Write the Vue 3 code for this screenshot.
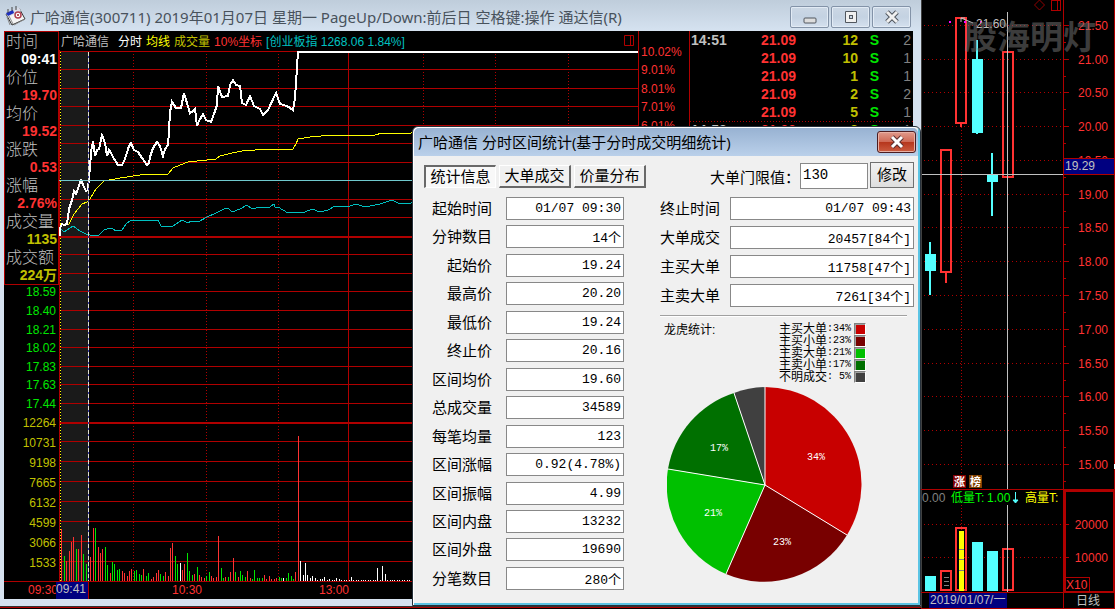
<script setup>
import { ref } from 'vue'

const info = [
  { label: '时间', value: '09:41', tone: 'white' },
  { label: '价位', value: '19.70', tone: 'red' },
  { label: '均价', value: '19.52', tone: 'red' },
  { label: '涨跌', value: '0.53', tone: 'red' },
  { label: '涨幅', value: '2.76%', tone: 'red' },
  { label: '成交量', value: '1135', tone: 'gold' },
  { label: '成交额', value: '224万', tone: 'gold' },
]

const leftAxis = [
  ['18.59', 291], ['18.40', 310], ['18.21', 329], ['18.02', 347], ['17.83', 366], ['17.63', 384], ['17.44', 403],
  ['12264', 422], ['10731', 442], ['9198', 462], ['7665', 482], ['6132', 502], ['4599', 522], ['3066', 542], ['1533', 562],
].map(([text, y]) => ({ text, y }))

const rightAxis = [
  ['10.02%', 51], ['9.01%', 69], ['8.01%', 88], ['7.01%', 106], ['6.01%', 125],
].map(([text, y]) => ({ text, y }))

const gridRows = [51, 69, 88, 106, 125, 143, 162, 199, 217, 254, 273, 291, 310, 329, 347, 366, 384, 403, 441, 461, 481, 501, 521, 541, 561, 581]
const gridDots = [133, 206, 278, 423, 495, 568]

const priceLine = '60,236 60,228 62,224 64,225 67,224 69,209 72,200 74,191 76,194 78,189 80,182 81,180 84,187 86,191 88,190 89,176 90,168 91,152 93,141 95,156 97,150 99,149 102,135 105,143 107,156 109,150 111,153 113,157 118,165 122,165 125,159 129,146 131,143 134,150 138,152 142,158 147,165 149,163 150,157 153,148 157,142 160,146 163,156 165,149 168,145 169,131 170,112 172,102 176,108 181,108 184,93 187,103 190,113 193,111 195,109 197,126 199,121 203,114 206,120 211,122 214,114 217,105 218,86 222,97 228,96 230,85 233,80 236,85 240,86 242,103 246,105 250,96 254,106 260,109 263,115 268,110 276,93 280,104 287,106 293,110 295,98 298,52 638,52'
const averageLine = '60,225 69,224 74,214 82,204 87,202 90,199 96,189 104,181 120,178 140,175 168,174 173,168 180,165 188,162 216,159 220,156 232,153 242,151 255,150 293,149 296,144 298,139 310,137 333,135 375,135 382,133 411,133 638,132'
const indexLine = '60,228 64,232 73,226 80,231 86,234 94,236 99,235 104,230 110,228 112,228 116,231 122,230 126,224 131,220 134,221 158,220 161,226 173,226 182,220 188,223 191,221 198,222 207,217 216,213 224,209 226,208 229,209 232,212 240,209 247,205 252,209 256,208 270,207 274,204 275,207 278,207 288,213 305,212 312,209 320,212 328,210 335,206 350,206 356,204 365,207 380,204 392,200 400,204 411,203 638,206'

const volumeText = '61r52 64g25 66r20 69r30 71r39 73r44 76g32 78r32 81r46 83g27 86g17 90r24 93r53 95g53 98r34 100r28 102r32 105g34 107g16 110r8 112g19 114g17 117g11 119g12 122r10 124r8 127r5 129r10 131r12 134g10 136g11 139g7 141g6 143r12 146g5 148g8 151r2 153r4 156r8 158r11 160g7 163g5 165r9 168r5 170r33 172r38 175g25 177g17 180w18 182r11 184r17 187g28 189g10 192g6 194r7 197g14 199r6 201r4 204r3 206g5 209g9 211r5 213r3 216r4 218r45 221g13 223g3 225r4 228g4 230r9 233r23 235g9 238r4 240g10 242g6 245g4 247r10 250r3 252g2 254g11 257g3 259g3 262g3 264r6 266r2 269r5 271r2 274r2 276r3 279g4 281g3 283w3 286g3 288g8 291g5 293g2 295r9 298r145 300w20 303w6 305w18 307w6 310w3 312w5 315w3 317w1 320w2 322w2 324w4 327w1 329w2 332w1 334w1 336w3 339w2 341w1 344w1 346w1 349w1 351w4 353w1 356w1 358w1 361w1 363w1 365w1 368w1 370w1 373w1 375w1 377w13 380w1 382w15 385w7 387w1 390w1 392w1 394w1 397w1 399w1 402w1 404w1 407w1 409w1'
const barColors = { r: '#ff3232', g: '#00e600', w: '#ffffff' }
const volumes = volumeText.split(' ').map((item) => {
  const [, x, key, h] = item.match(/(\d+)([rgw])(\d+)/)
  return { x: Number(x), h: Number(h), fill: barColors[key] }
})

const trades = [
  ['14:51', '21.09', '12', 'S', '2'],
  ['', '21.09', '10', 'S', '1'],
  ['', '21.09', '1', 'S', '1'],
  ['', '21.09', '2', 'S', '2'],
  ['', '21.09', '5', 'S', '1'],
  ['14:52', '21.09', '8', 'S', '1'],
]

const dayAxis = [
  ['21.50', 25], ['21.00', 59], ['20.50', 92], ['20.00', 126], ['19.50', 160], ['19.00', 194], ['18.50', 227],
  ['18.00', 261], ['17.50', 295], ['17.00', 329], ['16.50', 363], ['16.00', 396], ['15.50', 430], ['15.00', 464],
].map(([text, y]) => ({ text, y }))

const tabs = ['统计信息', '大单成交', '价量分布']
const activeTab = ref('统计信息')
const threshold = ref('130')

const leftFields = [
  ['起始时间', '01/07 09:30'], ['分钟数目', '14个'], ['起始价', '19.24'], ['最高价', '20.20'], ['最低价', '19.24'],
  ['终止价', '20.16'], ['区间均价', '19.60'], ['总成交量', '34589'], ['每笔均量', '123'], ['区间涨幅', '0.92(4.78%)'],
  ['区间振幅', '4.99'], ['区间内盘', '13232'], ['区间外盘', '19690'], ['分笔数目', '280个'],
]
const rightFields = [
  ['终止时间', '01/07 09:43'], ['大单成交', '20457[84个]'], ['主买大单', '11758[47个]'], ['主卖大单', '7261[34个]'],
]

const legend = [
  { name: '主买大单', share: '34%', color: '#c80000' },
  { name: '主买小单', share: '23%', color: '#780000' },
  { name: '主卖大单', share: '21%', color: '#00c000' },
  { name: '主卖小单', share: '17%', color: '#007000' },
  { name: '不明成交', share: '5%', color: '#404040' },
]
const slices = [
  { from: [98, 0], to: [180, 148], label: [149, 73] },
  { from: [180, 148], to: [59, 187], label: [115, 158] },
  { from: [59, 187], to: [1, 82], label: [46, 129] },
  { from: [1, 82], to: [67, 6], label: [52, 64] },
  { from: [67, 6], to: [98, 0], label: null },
].map((s, i) => ({ ...s, ...legend[i], d: `M98 98L${s.from}A97 97 0 0 1 ${s.to}Z` }))
</script>

<template>
  <div class="desktop">
    <section class="window">
      <header class="titlebar">
        <svg class="app-icon" width="22" height="21" viewBox="0 0 22 21">
          <path d="M1 8L14 2L20 13L7 19Z" fill="#f4f4f4" stroke="#333" />
          <path d="M1 7L14 1L16 5L3 11Z" fill="#d8dce8" />
          <path d="M1 7L8 4L9 7L3 10Z" fill="#1c2fc0" />
          <path d="M2 11L5 19M4 10L8 18M9 19L20 13" stroke="#8a8a8a" fill="none" />
          <circle cx="13" cy="9" r="3" fill="#fff" stroke="#b04050" stroke-width="1.500" />
          <circle cx="13" cy="9" r="1" fill="#a02030" />
          <path d="M3 3V7M7 1V5M11 0V4" stroke="#444" />
        </svg>
        <h1>广哈通信(300711) 2019年01月07日 星期一 PageUp/Down:前后日 空格键:操作 通达信(R)</h1>
        <div class="controls">
          <button type="button" aria-label="最小化">
            <svg width="16" height="16" viewBox="0 0 16 16"><rect x="2" y="9" width="12" height="5" rx="1" fill="#ddd" stroke="#50565e" /></svg>
          </button>
          <button type="button" aria-label="最大化">
            <svg width="16" height="16" viewBox="0 0 16 16"><path d="M2.500 2.500H13.500V13.500H2.500Z" fill="#f0f0f0" stroke="#50565e" /><rect x="6.500" y="6.500" width="3" height="3" fill="#c9d6e4" stroke="#50565e" /></svg>
          </button>
          <button type="button" aria-label="关闭">
            <svg width="16" height="16" viewBox="0 0 16 16"><path d="M3 3L13 13M13 3L3 13" stroke="#50565e" stroke-width="5" /><path d="M3 3L13 13M13 3L3 13" stroke="#f0f0f0" stroke-width="3" /></svg>
          </button>
        </div>
      </header>

      <div class="workspace">
        <aside class="side">
          <dl class="info">
            <template v-for="row in info" :key="row.label">
              <dt>{{ row.label }}</dt>
              <dd :class="row.tone">{{ row.value }}</dd>
            </template>
          </dl>
          <svg class="axis" viewBox="4 285 55 314">
            <text v-for="tick in leftAxis" :key="tick.text" x="56" :y="tick.y + 5" text-anchor="end" :fill="tick.y < 410 ? '#00e600' : '#c0c000'">{{ tick.text }}</text>
            <rect x="4" y="581" width="55" height="1" fill="#b00000" />
            <text x="28" y="594" fill="#ff3232">09:30</text>
          </svg>
        </aside>

        <div class="plot">
          <div class="plot-head">
            <span class="silver">广哈通信</span>
            <span class="head-group">
              <span class="white">分时</span><span class="yellow">均线</span><span class="gold">成交量</span>
              <span class="red">10%坐标</span><span class="teal">[创业板指 1268.06 1.84%]</span>
            </span>
            <svg class="pane-icon" width="12" height="12" viewBox="0 0 12 12"><path d="M0.500 0.500H9.500V10.500H0.500ZM6.500 0.500V10.500" fill="none" stroke="#b00000" /></svg>
          </div>
          <svg class="chart" viewBox="59 50 580 549">
            <g shape-rendering="crispEdges">
              <rect x="61" y="52" width="27" height="529" fill="#1a1a1a" />
              <rect v-for="y in gridRows" :key="y" x="60" :y="y" width="578" height="1" fill="#b00000" />
              <rect x="60" y="236" width="578" height="2" fill="#b00000" />
              <rect x="60" y="422" width="578" height="2" fill="#b00000" />
              <line v-for="x in gridDots" :key="x" :x1="x + 0.5" :x2="x + 0.5" y1="54" y2="581" stroke="#b00000" stroke-dasharray="1 2" />
              <rect x="59" y="50" width="1" height="549" fill="#b00000" />
              <rect x="348" y="51" width="1" height="531" fill="#b00000" />
              <rect x="638" y="50" width="1" height="549" fill="#b00000" />
              <line x1="60.5" x2="60.5" y1="52" y2="581" stroke="#ffff00" stroke-dasharray="1 2" />
              <rect v-for="bar in volumes" :key="bar.x" :x="bar.x" :y="581 - bar.h" width="1" :height="bar.h" :fill="bar.fill" />
            </g>
            <g fill="none" shape-rendering="crispEdges">
              <polyline :points="indexLine" stroke="#00c0c0" />
              <polyline :points="averageLine" stroke="#ffff00" />
            </g>
            <polyline :points="priceLine" fill="none" stroke="#fff" stroke-width="2" shape-rendering="crispEdges" />
            <g shape-rendering="crispEdges">
              <rect x="59" y="180" width="579" height="1" fill="#6fc8cc" />
              <line x1="88.5" x2="88.5" y1="52" y2="581" stroke="#3838a8" />
              <line x1="88.5" x2="88.5" y1="52" y2="581" stroke="#e0e0d0" stroke-dasharray="4 2" />
              <rect x="56" y="582" width="32" height="17" fill="#000080" />
              <rect x="88" y="582" width="1" height="17" fill="#b00000" />
            </g>
            <text x="56" y="593" fill="#c0c0c0">09:41</text>
            <text x="187" y="594" text-anchor="middle" fill="#ff3232">10:30</text>
            <text x="334" y="594" text-anchor="middle" fill="#ff3232">13:00</text>
          </svg>
        </div>

        <svg class="axis percent" viewBox="639 31 50 568">
          <text v-for="tick in rightAxis" :key="tick.text" x="641" :y="tick.y + 5" fill="#ff3232">{{ tick.text }}</text>
        </svg>

        <table class="trades">
          <tbody>
            <tr v-for="(row, i) in trades" :key="i">
              <td class="silver time">{{ row[0] }}</td>
              <td class="red">{{ row[1] }}</td>
              <td class="gold">{{ row[2] }}</td>
              <td class="green">{{ row[3] }}</td>
              <td class="gray">{{ row[4] }}</td>
            </tr>
          </tbody>
        </table>
      </div>
    </section>

    <section class="daily">
      <svg viewBox="921 0 194 609">
        <g shape-rendering="crispEdges">
          <rect x="921" y="0" width="1" height="609" fill="#404040" />
          <line v-for="tick in dayAxis" :key="tick.y" x1="924" x2="1063" :y1="tick.y + 0.5" :y2="tick.y + 0.5" stroke="#b00000" stroke-dasharray="1 3" />
          <line x1="924" x2="1063" y1="524.5" y2="524.5" stroke="#b00000" stroke-dasharray="1 3" />
          <line x1="924" x2="1063" y1="557.5" y2="557.5" stroke="#b00000" stroke-dasharray="1 3" />
          <line x1="961.5" x2="961.5" y1="127" y2="489" stroke="#b00000" stroke-dasharray="1 2" />
          <line x1="961.5" x2="961.5" y1="505" y2="592" stroke="#b00000" stroke-dasharray="1 2" />
          <g fill="#b00000">
            <rect x="1063" y="0" width="1" height="609" />
            <rect x="1114" y="0" width="1" height="609" />
            <rect v-for="tick in dayAxis" :key="tick.y" x="1064" :y="tick.y" width="5" height="1" />
            <rect v-for="tick in dayAxis" :key="tick.text" x="1064" :y="tick.y + 17" width="2" height="1" />
            <rect x="1064" y="524" width="5" height="1" />
            <rect x="1064" y="541" width="2" height="1" />
            <rect x="1064" y="557" width="5" height="1" />
            <rect x="921" y="489" width="194" height="1" />
            <rect x="921" y="592" width="194" height="1" />
            <rect x="921" y="608" width="194" height="1" />
          </g>
          <g fill="none" stroke="#b00000">
            <path d="M1051.500 0.500H1060.500V10.500H1051.500ZM1057.500 0.500V10.500" />
            <rect x="1065" y="491" width="49" height="101" stroke-width="2" />
            <rect x="1064.500" y="577.500" width="25" height="15" />
          </g>
          <g fill="#54ffff">
            <rect x="929" y="242" width="2" height="53" /><rect x="925" y="254" width="11" height="17" />
            <rect x="976" y="40" width="2" height="94" /><rect x="972" y="59" width="11" height="74" />
            <rect x="991" y="153" width="2" height="63" /><rect x="987" y="174" width="11" height="8" />
            <rect x="925" y="576" width="11" height="15" />
            <rect x="972" y="542" width="11" height="49" />
            <rect x="987" y="551" width="11" height="40" />
          </g>
          <g fill="none" stroke="#ff3232" stroke-width="2">
            <path d="M941 150H951V272H941ZM946 273V283" />
            <path d="M956 18H966V123H956ZM961 124V127" />
            <path d="M1003 52H1013V177H1003Z" />
            <path d="M941 571H951V590H941ZM956 528H966V590H956ZM1003 549H1013V590H1003Z" />
          </g>
          <rect x="959" y="531" width="5" height="60" fill="#ffff00" />
          <path d="M959 549.500H964M959 559.500H964M959 570.500H964M944 577.500H949M944 581.500H949M944 585.500H949" stroke="#808080" />
          <g fill="#ff00ff"><rect x="949" y="21" width="2" height="2" /><rect x="964" y="21" width="2" height="2" /><rect x="980" y="21" width="2" height="2" /></g>
          <rect x="922" y="174" width="142" height="1" fill="#c0c0c0" />
          <rect x="1007" y="12" width="1" height="477" fill="#c0c0c0" />
          <rect x="1007" y="505" width="1" height="87" fill="#c0c0c0" />
        </g>
        <path d="M1039.500 0L1044.500 5L1039.500 10L1034.500 5Z" fill="none" stroke="#900000" />
        <path d="M961 18L973 23M961 18V22M961 18H965" stroke="#c0c0c0" fill="none" />
        <text x="976" y="28" fill="#c0c0c0">21.60</text>
        <g fill="#ff3232" text-anchor="end">
          <text v-for="tick in dayAxis" :key="tick.text" x="1108" :y="tick.y + 5">{{ tick.text }}</text>
          <text x="1108" y="529">20000</text>
          <text x="1108" y="562">10000</text>
        </g>
        <text x="1066" y="589" fill="#ff3232">X10</text>
        <text class="watermark" x="964" y="49">股海明灯</text>
        <rect x="1063.500" y="158.500" width="51" height="16" fill="#000080" stroke="#b00000" />
        <text x="1065" y="170" fill="#c0c0c0">19.29</text>
        <rect x="953" y="475" width="13" height="13" fill="#800000" />
        <rect x="969" y="475" width="13" height="13" fill="#804000" />
        <g fill="#fff" class="badge"><text x="954" y="486">涨</text><text x="970" y="486">榜</text></g>
        <text x="922" y="502" fill="#808080">0.00</text>
        <text x="951" y="502" fill="#00ff00">低量T:</text>
        <text x="987" y="502" fill="#00ff00">1.00</text>
        <path d="M1015.500 492V502M1013 500H1018L1015.500 503Z" stroke="#54ffff" fill="#54ffff" />
        <text x="1025" y="502" fill="#ffff00">高量T:</text>
        <rect x="929" y="593" width="78" height="15" fill="#000080" />
        <text x="930" y="604" fill="#c0c0c0">2019/01/07/一</text>
        <text x="1076" y="605" fill="#c0c0c0">日线</text>
        <rect x="1114" y="464" width="1" height="5" fill="#fff" />
      </svg>
    </section>

    <section class="dialog" role="dialog" aria-labelledby="dialog-title">
      <header class="dialog-bar">
        <h2 id="dialog-title">广哈通信 分时区间统计(基于分时成交明细统计)</h2>
        <button type="button" class="close" aria-label="关闭">
          <svg width="16" height="16" viewBox="0 0 16 16"><path d="M3 3L13 13M13 3L3 13" stroke="#5a3030" stroke-width="5" /><path d="M3 3L13 13M13 3L3 13" stroke="#fff" stroke-width="3" /></svg>
        </button>
      </header>
      <div class="dialog-body">
        <div class="toolbar">
          <div class="tabs">
            <button v-for="tab in tabs" :key="tab" type="button" :class="['tab', { active: tab === activeTab }]" @click="activeTab = tab">{{ tab }}</button>
          </div>
          <label for="threshold">大单门限值：</label>
          <input id="threshold" v-model="threshold" type="text">
          <button type="button" class="modify">修改</button>
        </div>
        <div class="columns">
          <div class="fields left">
            <div v-for="(field, i) in leftFields" :key="field[0]" class="field">
              <label :for="`left-${i}`">{{ field[0] }}</label>
              <input :id="`left-${i}`" type="text" readonly :value="field[1]">
            </div>
          </div>
          <div class="summary">
            <div class="fields right">
              <div v-for="(field, i) in rightFields" :key="field[0]" class="field">
                <label :for="`right-${i}`">{{ field[0] }}</label>
                <input :id="`right-${i}`" type="text" readonly :value="field[1]">
              </div>
            </div>
            <hr>
            <div class="stats">
              <span>龙虎统计:</span>
              <ul class="legend">
                <li v-for="item in legend" :key="item.name">
                  <span>{{ item.name }}</span><span class="share">:</span><span class="share pct">{{ item.share }}</span>
                  <i :style="{ background: item.color }"></i>
                </li>
              </ul>
            </div>
            <svg class="pie" width="196" height="196" viewBox="0 0 196 196">
              <path v-for="slice in slices" :key="slice.name" :d="slice.d" :fill="slice.color" />
              <path v-for="slice in slices" :key="slice.color" :d="`M98 98L${slice.to}`" stroke="#fff" />
              <template v-for="slice in slices" :key="slice.share">
                <text v-if="slice.label" :x="slice.label[0]" :y="slice.label[1]" text-anchor="middle">{{ slice.share }}</text>
              </template>
            </svg>
          </div>
        </div>
      </div>
    </section>
  </div>
</template>

<style>
body {
  background: #000;
}
</style>

<style scoped>
* {
  box-sizing: border-box;
}

.desktop {
  position: relative;
  display: grid;
  grid-template-columns: minmax(0, 921fr) minmax(0, 194fr);
  align-items: start;
  min-height: 100vh;
  overflow: hidden;
  background: #000;
  font-family: "Liberation Sans", "Noto Sans CJK SC", sans-serif;
  font-size: 12px;
}

h1,
h2,
dl,
dd,
ul {
  margin: 0;
  padding: 0;
  font-weight: normal;
}

button,
input {
  font: inherit;
  padding: 0;
}

svg {
  display: block;
}

.silver { color: #c0c0c0; }
.white { color: #fff; }
.red { color: #ff3232; }
.gold { color: #c0c000; }
.yellow { color: #ffff00; }
.teal { color: #00c0c0; }
.green { color: #00e600; }
.gray { color: #808080; }

.window {
  padding: 0 8px 7px 4px;
  background: #d6e2f0;
  border-bottom: 1px solid #333;
  box-shadow: 0 1px #b00000;
}

.titlebar {
  display: flex;
  align-items: center;
  height: 31px;
  margin: 0 -8px 0 -4px;
  padding: 2px 10px 0 5px;
  background: linear-gradient(#bfcddb, #d5e2f0);
}

.titlebar h1 {
  flex: 1;
  margin-left: 3px;
  overflow: hidden;
  white-space: nowrap;
  color: #48525c;
  font: 15px/24px "Noto Sans", "Noto Sans CJK SC", sans-serif;
}

.controls {
  display: flex;
  gap: 2px;
}

.controls button {
  display: grid;
  place-items: center;
  width: 39px;
  height: 22px;
  background: linear-gradient(#ccd8e5, #c4d2e2 50%, #d4e0ee);
  border: 1px solid #8393a8;
  border-radius: 2px;
  box-shadow: inset 0 0 0 1px #e2ebf5;
}

.workspace {
  display: grid;
  grid-template-columns: 55px minmax(0, 1fr) 50px 224px;
  align-items: start;
  background: #000;
}

.info {
  border: 1px solid #b00000;
  padding-left: 1px;
  line-height: 18px;
}

.info dt {
  height: 18px;
  color: #c0c0c0;
  font-size: 16px;
  font-weight: 300;
  line-height: 20px;
  white-space: nowrap;
}

.info dd {
  height: 18px;
  padding-right: 1px;
  text-align: right;
  font-size: 14px;
  font-weight: bold;
}

.axis {
  width: 100%;
  overflow: hidden;
}

.chart,
.percent {
  overflow: visible;
}

.plot-head {
  display: flex;
  align-items: center;
  height: 19px;
  padding: 0 2px;
  white-space: nowrap;
  border-right: 1px solid #b00000;
}

.head-group {
  display: flex;
  flex: 1;
  gap: 4px;
  margin-left: 9px;
}

.trades {
  width: 100%;
  border-left: 1px solid #b00000;
  border-spacing: 0;
  table-layout: fixed;
  font-size: 14px;
  font-weight: bold;
  line-height: 18px;
  text-align: right;
}

.trades td {
  height: 18px;
  padding: 0;
}

.trades td:nth-child(1) { width: 44px; padding-left: 1px; text-align: left; }
.trades td:nth-child(2) { width: 62px; }
.trades td:nth-child(3) { width: 62px; }
.trades td:nth-child(4) { width: 21px; }
.trades td:nth-child(5) { padding-right: 2px; font-weight: normal; }

.trades tr:nth-child(6) td {
  background: linear-gradient(90deg, #b00000 1px, transparent 1px) 0 0 / 3px 1px repeat-x;
}

.daily text.watermark {
  font-size: 33px;
  font-weight: bold;
  fill: #787878;
  fill-opacity: 0.5;
}

.badge {
  font-size: 11px;
  font-weight: bold;
}

.dialog {
  position: absolute;
  left: 412px;
  top: 126px;
  width: 509px;
  background: #f0f0f0;
  border: 1px solid #26303a;
  border-radius: 6px 6px 0 0;
  box-shadow: inset 1px 1px #fff, inset -2px -2px #5cc4e4;
  color: #000;
}

.dialog-bar {
  display: flex;
  align-items: center;
  justify-content: space-between;
  height: 28px;
  margin: 1px 2px 0 1px;
  padding: 0 2px 0 4px;
  background: linear-gradient(#98b2d2, #bad0ea);
  border-radius: 5px 5px 0 0;
}

.dialog-bar h2 {
  font: 15px/28px "Open Sans", "Noto Sans CJK SC", sans-serif;
  white-space: nowrap;
}

.close {
  display: grid;
  place-items: center;
  width: 39px;
  height: 22px;
  background: linear-gradient(#e09a8c, #cf6a56 48%, #b5351c 50%, #cc5c40);
  border: 1px solid #4c1c20;
  border-radius: 3px;
  box-shadow: inset 0 0 0 1px #e8b0a4;
}

.dialog-body {
  padding: 6px 6px 15px 11px;
  font-size: 15px;
}

.toolbar {
  display: flex;
  align-items: center;
  height: 28px;
}

.tabs {
  display: flex;
  flex: 1;
  gap: 3px;
}

.tab {
  width: 72px;
  height: 23px;
  line-height: 20px;
  background: #f0f0f0;
  border: 1px solid #fff;
  border-right: 2px solid #696969;
  border-bottom: 2px solid #696969;
  white-space: nowrap;
}

.tab.active {
  background: #f8f8f8;
  border: 1px solid #fff;
  border-top: 2px solid #696969;
  border-left: 2px solid #696969;
}

.toolbar label {
  white-space: nowrap;
}

.toolbar input {
  width: 68px;
  height: 26px;
  padding: 0 0 2px 2px;
  border: 1px solid #888;
  background: #fff;
  font: 14px "Liberation Mono", monospace;
}

.modify {
  width: 44px;
  height: 26px;
  margin: 0 0 2px 2px;
  line-height: 22px;
  background: linear-gradient(#f2f2f2, #dedede);
  border: 1px solid #707070;
}

.columns {
  display: flex;
  justify-content: space-between;
  padding-top: 7px;
}

.fields {
  display: flex;
  flex-direction: column;
  justify-content: space-between;
}

.left {
  width: 200px;
  height: 393px;
}

.right {
  height: 110px;
}

.summary {
  width: 254px;
}

.field {
  display: flex;
  align-items: center;
}

.field label {
  width: 60px;
  line-height: 23px;
  text-align: right;
  white-space: nowrap;
}

.left label {
  margin: 0 14px 0 8px;
}

.right label {
  margin-right: 10px;
}

.field input {
  flex: 1;
  min-width: 0;
  height: 23px;
  padding: 0 2px;
  background: #fff;
  border: 1px solid #888;
  text-align: right;
  font: 13px "Liberation Mono", "Noto Sans CJK SC", monospace;
}

hr {
  height: 2px;
  margin: 8px 7px 0 0;
  border: 0;
  border-top: 1px solid #a0a0a0;
  border-bottom: 1px solid #fff;
}

.stats {
  display: flex;
  justify-content: space-between;
  margin: 6px 48px 0 4px;
  font-size: 12px;
  line-height: 12px;
}

.stats > span {
  line-height: 14px;
}

.legend {
  list-style: none;
}

.legend li {
  display: flex;
  align-items: center;
  height: 12px;
}

.share {
  font: 10px/12px "Liberation Mono", monospace;
}

.pct {
  width: 18px;
  text-align: right;
}

.legend i {
  width: 12px;
  height: 12px;
  margin-left: 3px;
  border: 1px solid #808080;
  border-right-color: #fff;
  border-bottom-color: #fff;
  box-shadow: inset 1px 1px #a0a0a0;
}

.pie {
  margin: 4px 0 0 7px;
}

.pie text {
  fill: #fff;
  font: 10px "Liberation Mono", monospace;
}
</style>
